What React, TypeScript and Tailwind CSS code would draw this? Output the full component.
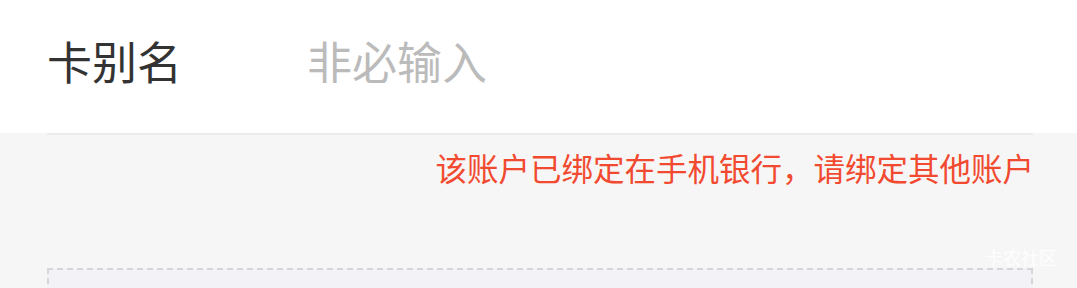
import React from "react";

const cjk = { fontFamily: '"Noto Sans CJK SC", "Noto Sans", sans-serif' };

export default function App() {
  return (
    <div
      className="relative w-[1077px] h-[288px] overflow-hidden bg-[#f6f6f6]"
      style={cjk}
    >
      {/* card alias row */}
      <div className="flex h-[133px] items-start bg-white pl-[47px] pt-[38px]">
        <span className="block h-[45px] w-[260px] text-[45px] leading-[45px] text-[#333333]">卡别名</span>
        <input
          className="block h-[45px] flex-1 bg-transparent p-0 text-[45px] leading-[45px] text-[#333333] outline-none placeholder:text-[#bbbbbb]"
          placeholder="非必输入"
          style={cjk}
        />
      </div>
      <div className="ml-[47px] mr-[44px] h-[2px] bg-[#ebebeb]" />

      <p className="mt-[12px] pr-[43px] text-right text-[31.5px] leading-[40px] text-[#f24a30]">
        该账户已绑定在手机银行，请绑定其他账户
      </p>

      <div className="ml-[47px] mr-[44px] mt-[81px] h-[120px] border-2 border-dashed border-[#d6d6da] bg-[#f3f3f7]" />

      <span className="absolute left-[985px] top-[248px] text-[18px] leading-[18px] text-white/80">
        卡农社区
      </span>
    </div>
  );
}
